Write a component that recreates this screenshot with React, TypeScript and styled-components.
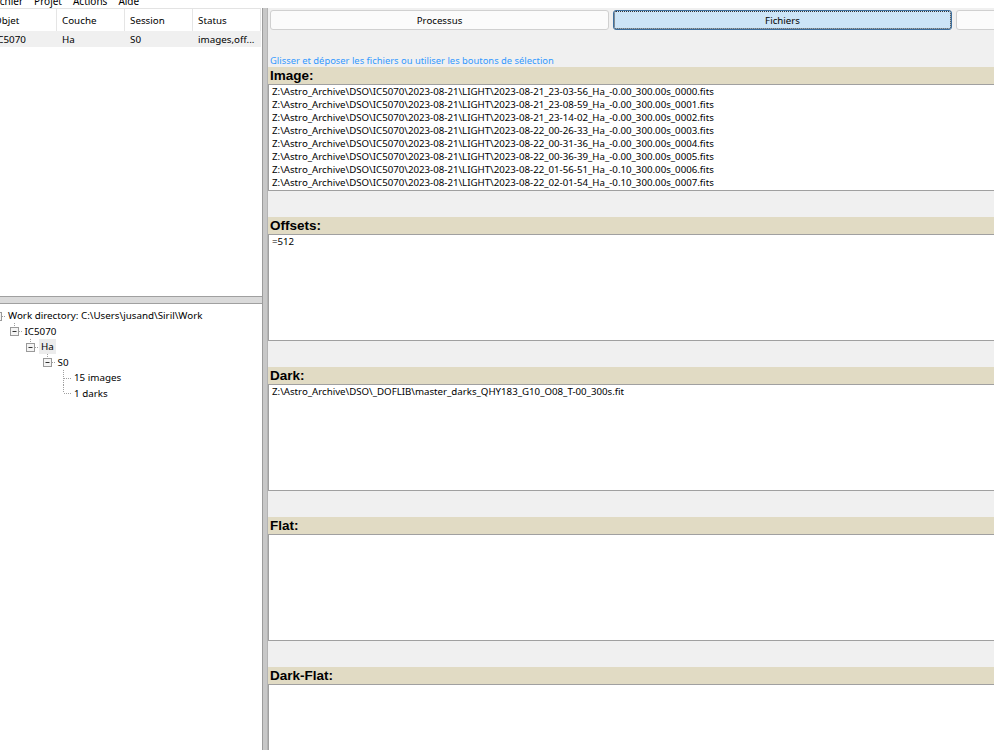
import styled, { createGlobalStyle } from "styled-components";

const GlobalStyle = createGlobalStyle`
  html, body {
    margin: 0;
    padding: 0;
    background: #f0f0f0;
  }
  body {
    font-family: "Noto Sans", "Open Sans", sans-serif;
    font-size: 9.7px;
    color: #000;
  }
  #root {
    width: 994px;
    height: 750px;
    overflow: hidden;
  }
`

const Window = styled.div`
    width: 994px;
    height: 750px;
    display: flex;
    flex-direction: column;
    overflow: hidden;
    background: #f0f0f0;
`

const MenuBar = styled.div`
    height: 8px;
    flex: none;
    background: #fff;
    overflow: hidden;
`
const MenuItems = styled.div`
    display: flex;
    margin: -5px 0 0 -13px;
    line-height: 12px;
    font-size: 10px;
`
const MenuItem = styled.span`
    padding: 0 6px 0 5px;
    white-space: nowrap;
`

const Main = styled.div`
    flex: 1;
    display: flex;
    min-height: 0;
`

const LeftPane = styled.div`
    width: 262px;
    flex: none;
    display: flex;
    flex-direction: column;
    overflow: hidden;
    font-size: 9.8px;
`
const ListPanel = styled.div`
    height: 289px;
    flex: none;
    box-sizing: border-box;
    background: #fff;
    border-bottom: 1px solid #a0a0a0;
    overflow: hidden;
`
const Table = styled.div`
    margin-left: -11px;
    width: 272px;
`
const Row = styled.div<{ $header?: boolean }>`
    display: grid;
    grid-template-columns: repeat(4, 68px);
    height: ${p => p.$header ? '22px' : '16px'};
    background: ${p => p.$header ? '#fff' : '#f0f0f0'};
    border-top: ${p => p.$header ? '1px solid #e3e3e3' : 'none'};
`
const Cell = styled.div<{ $header?: boolean }>`
    display: flex;
    align-items: center;
    padding-left: 5px;
    white-space: nowrap;
    overflow: hidden;
    border-right: ${p => p.$header ? '1px solid #e5e5e5' : 'none'};
`

const HSplit = styled.div`
    height: 6px;
    flex: none;
    background: #dadada;
`

const TreePanel = styled.div`
    flex: 1;
    background: #fff;
    border-top: 1px solid #a0a0a0;
    padding-top: 4px;
    overflow: hidden;
`
const TreeRow = styled.div<{ $level: number }>`
    display: flex;
    align-items: center;
    height: 15.5px;
    margin-left: ${p => p.$level * 16.5 - 11}px;
    white-space: nowrap;
`
const TreeLabel = styled.span<{ $selected?: boolean }>`
    margin-left: 1px;
    padding: 0 2px;
    line-height: 15px;
    background: ${p => p.$selected ? '#ececec' : 'transparent'};
`
const JunctionSvg = styled.svg`
    display: block;
    flex: none;
`

const VSplit = styled.div`
    width: 6px;
    flex: none;
    box-sizing: border-box;
    background: #c8c8c8;
    border-left: 1px solid #9c9c9c;
    border-right: 1px solid #b4b4b4;
`

const RightPane = styled.div`
    flex: 1;
    min-width: 0;
    overflow: hidden;
    background: #f0f0f0;
    display: flex;
    flex-direction: column;
    padding-top: 2px;
`
const TabRow = styled.div`
    display: grid;
    grid-template-columns: repeat(3, 339px);
    gap: 4px;
    padding-left: 2px;
`
const TabButton = styled.div<{ $active?: boolean }>`
    height: 20px;
    box-sizing: border-box;
    display: flex;
    align-items: center;
    justify-content: center;
    border-radius: 3px;
    border: 1px solid ${p => p.$active ? '#3d6f9f' : '#d0d0d0'};
    background: ${p => p.$active ? '#cce4f7' : '#fbfbfb'};
    outline: ${p => p.$active ? '1px dotted #333' : 'none'};
    outline-offset: -2px;
`
const Hint = styled.div`
    margin-top: 24px;
    padding-left: 2px;
    line-height: 13px;
    font-size: 9.4px;
    color: #3399ff;
    white-space: nowrap;
`
const Section = styled.div<{ $first?: boolean }>`
    margin-top: ${p => p.$first ? '0' : '26px'};
`
const Bar = styled.div`
    height: 17px;
    line-height: 17px;
    padding-left: 2px;
    background: #e1dbc4;
    font-family: "Liberation Sans", Arial, sans-serif;
    font-weight: bold;
    font-size: 13.5px;
`
const Box = styled.div`
    height: 107px;
    box-sizing: border-box;
    background: #fff;
    border: 1px solid #a0a0a0;
    border-right: none;
    padding: 0 3px;
    overflow: hidden;
`
const Line = styled.div`
    line-height: 13px;
    white-space: nowrap;
`

function Junction({ expander, last, noVert }: { expander?: boolean; last?: boolean; noVert?: boolean }) {
    return (
        <JunctionSvg width={16} height={16} viewBox="0 0 16 16">
            {!noVert && (
                <line x1="8.5" y1="0" x2="8.5" y2={last ? 8 : 16} stroke="#a0a0a0" strokeDasharray="1 1" />
            )}
            <line x1="9" y1="8.5" x2="16" y2="8.5" stroke="#a0a0a0" strokeDasharray="1 1" />
            {expander && (
                <>
                    <rect x="4.5" y="4.5" width="8" height="8" fill="#f4f4f4" stroke="#9a9a9a" />
                    <line x1="6.5" y1="8.5" x2="10.5" y2="8.5" stroke="#333" />
                </>
            )}
        </JunctionSvg>
    )
}

const files = [
    '2023-08-21_23-03-56_Ha_-0.00_300.00s_0000.fits',
    '2023-08-21_23-08-59_Ha_-0.00_300.00s_0001.fits',
    '2023-08-21_23-14-02_Ha_-0.00_300.00s_0002.fits',
    '2023-08-22_00-26-33_Ha_-0.00_300.00s_0003.fits',
    '2023-08-22_00-31-36_Ha_-0.00_300.00s_0004.fits',
    '2023-08-22_00-36-39_Ha_-0.00_300.00s_0005.fits',
    '2023-08-22_01-56-51_Ha_-0.10_300.00s_0006.fits',
    '2023-08-22_02-01-54_Ha_-0.10_300.00s_0007.fits',
    '2023-08-22_02-06-57_Ha_-0.10_300.00s_0008.fits',
]

const tree = [
    { level: 0, label: 'Work directory: C:\\Users\\jusand\\Siril\\Work', expander: true, last: true, noVert: true },
    { level: 1, label: 'IC5070', expander: true, last: true },
    { level: 2, label: 'Ha', expander: true, last: true, selected: true },
    { level: 3, label: 'S0', expander: true, last: true },
    { level: 4, label: '15 images' },
    { level: 4, label: '1 darks', last: true },
]

export default function App() {
    return (
        <Window>
            <GlobalStyle />
            <MenuBar>
                <MenuItems>
                    <MenuItem>Fichier</MenuItem>
                    <MenuItem>Projet</MenuItem>
                    <MenuItem>Actions</MenuItem>
                    <MenuItem>Aide</MenuItem>
                </MenuItems>
            </MenuBar>
            <Main>
                <LeftPane>
                    <ListPanel>
                        <Table>
                            <Row $header>
                                <Cell $header>Objet</Cell>
                                <Cell $header>Couche</Cell>
                                <Cell $header>Session</Cell>
                                <Cell $header>Status</Cell>
                            </Row>
                            <Row>
                                <Cell>IC5070</Cell>
                                <Cell>Ha</Cell>
                                <Cell>S0</Cell>
                                <Cell>images,off...</Cell>
                            </Row>
                        </Table>
                    </ListPanel>
                    <HSplit />
                    <TreePanel>
                        {tree.map((t, i) => (
                            <TreeRow key={i} $level={t.level}>
                                <Junction expander={t.expander} last={t.last} noVert={t.noVert} />
                                <TreeLabel $selected={t.selected}>{t.label}</TreeLabel>
                            </TreeRow>
                        ))}
                    </TreePanel>
                </LeftPane>
                <VSplit />
                <RightPane>
                    <TabRow>
                        <TabButton>Processus</TabButton>
                        <TabButton $active>Fichiers</TabButton>
                        <TabButton>Paramètres</TabButton>
                    </TabRow>
                    <Hint>Glisser et déposer les fichiers ou utiliser les boutons de sélection</Hint>
                    <Section $first>
                        <Bar>Image:</Bar>
                        <Box>
                            {files.map(f => (
                                <Line key={f}>Z:\Astro_Archive\DSO\IC5070\2023-08-21\LIGHT\{f}</Line>
                            ))}
                        </Box>
                    </Section>
                    <Section>
                        <Bar>Offsets:</Bar>
                        <Box>
                            <Line>=512</Line>
                        </Box>
                    </Section>
                    <Section>
                        <Bar>Dark:</Bar>
                        <Box>
                            <Line>Z:\Astro_Archive\DSO\_DOFLIB\master_darks_QHY183_G10_O08_T-00_300s.fit</Line>
                        </Box>
                    </Section>
                    <Section>
                        <Bar>Flat:</Bar>
                        <Box />
                    </Section>
                    <Section>
                        <Bar>Dark-Flat:</Bar>
                        <Box />
                    </Section>
                </RightPane>
            </Main>
        </Window>
    )
}
